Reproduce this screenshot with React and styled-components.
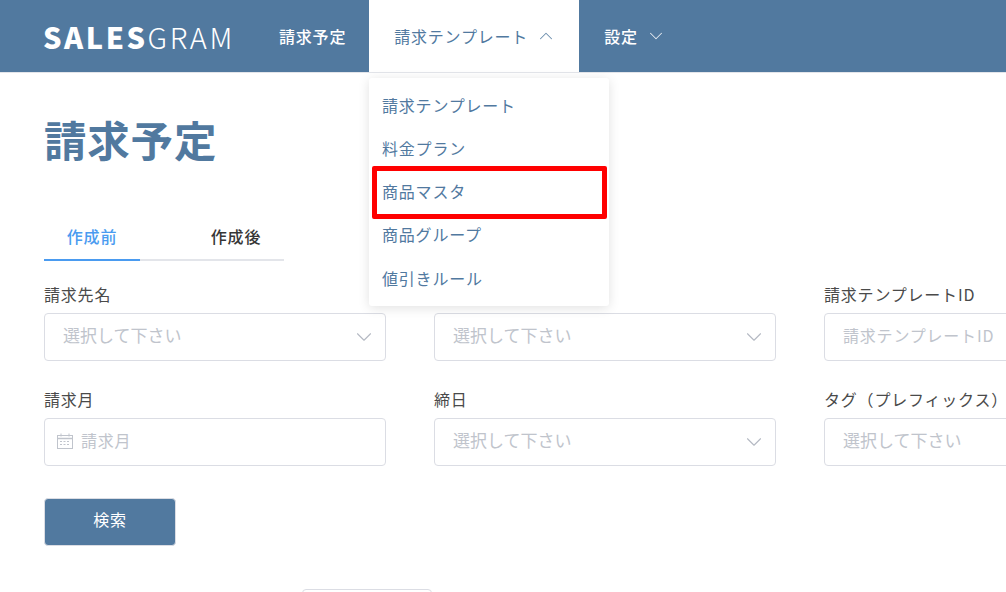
import { useState } from 'react';
import styled, { createGlobalStyle } from 'styled-components';
import { FiChevronDown, FiChevronUp } from 'react-icons/fi';

const GlobalStyle = createGlobalStyle`
  html, body {
    margin: 0;
    height: 100%;
    overflow: hidden;
    background: #fff;
  }
  body {
    font-family: 'Noto Sans CJK JP', 'Noto Sans', sans-serif;
    font-size: 16px;
    letter-spacing: 0.8px;
    color: #363636;
  }
  * {
    box-sizing: border-box;
  }
`;

const Header = styled.header`
  display: flex;
  align-items: stretch;
  height: 73px;
  padding-left: 43px;
  background: #51799f;
  border-bottom: 1px solid #e3e5ea;
`;
const Logo = styled.div`
  display: flex;
  align-items: center;
  width: 211px;
  font-size: 29px;
  letter-spacing: 2.55px;
  color: #fff;
  b {
    font-weight: 900;
  }
  span {
    font-weight: 300;
  }
`;
const Nav = styled.nav`
  display: flex;
  position: relative;
`;
const NavItem = styled.div`
  display: flex;
  align-items: center;
  gap: 7px;
  padding: 0 23px 1px 25px;
  font-weight: ${({ active }) => (active ? 400 : 500)};
  color: ${({ active }) => (active ? '#51799f' : '#fff')};
  background: ${({ active }) => (active ? '#fff' : 'transparent')};
  svg {
    font-size: 22px;
    margin-right: -1px;
    stroke-width: 1.1;
    opacity: 0.85;
  }
`;
const Menu = styled.ul`
  position: absolute;
  top: 78px;
  left: 115px;
  width: 240px;
  margin: 0;
  padding: 5px 0 7px;
  list-style: none;
  background: #fff;
  border-radius: 3px;
  box-shadow: 0 2px 12px rgba(0, 0, 0, 0.12);
  z-index: 10;
`;
const MenuItem = styled.li`
  position: relative;
  display: flex;
  align-items: center;
  height: 43.25px;
  padding: 0 13px;
  color: #51799f;
`;
const Highlight = styled.span`
  position: absolute;
  top: -4px;
  left: 3px;
  right: 2px;
  bottom: -6px;
  border: 5px solid #ff0000;
  border-radius: 2px;
`;
const Main = styled.main`
  padding-left: 44px;
  overflow: hidden;
`;
const Title = styled.h1`
  margin: 0;
  padding-top: 36px;
  font-size: 42.5px;
  line-height: 60px;
  font-weight: 700;
  letter-spacing: 0.8px;
  color: #51799f;
`;
const Tabs = styled.div`
  display: flex;
  gap: 48px;
  width: 240px;
  margin-top: 47px;
  border-bottom: 2px solid #e3e5ea;
`;
const Tab = styled.div`
  width: 96px;
  height: 45px;
  margin-bottom: -2px;
  text-align: center;
  line-height: 40px;
  font-weight: 500;
  color: ${({ active }) => (active ? '#4a9bf0' : '#363636')};
  border-bottom: 2px solid ${({ active }) => (active ? '#4a9bf0' : 'transparent')};
`;
const Form = styled.form`
  display: grid;
  grid-template-columns: repeat(3, 342px);
  column-gap: 48px;
  row-gap: 26px;
  margin-top: 21px;
`;
const Field = styled.div`
  display: flex;
  flex-direction: column;
`;
const Label = styled.label`
  height: 31px;
  line-height: 24px;
  white-space: nowrap;
  color: #4a4a4a;
`;
const Control = styled.div`
  display: flex;
  align-items: center;
  justify-content: space-between;
  height: 48px;
  padding: 0 18px 5px;
  border: 1px solid #dbdde4;
  border-radius: 4px;
  color: #c0c4cc;
`;
const Placeholder = styled.span`
  font-size: ${({ wide }) => (wide ? '17px' : '16px')};
  letter-spacing: ${({ wide }) => (wide ? '0' : '0.8px')};
`;
const Chevron = styled(FiChevronDown)`
  flex: none;
  font-size: 26px;
  margin: 5px -10px 0 0;
  stroke-width: 1;
  color: #b4b9c3;
`;
const DateValue = styled.div`
  display: flex;
  align-items: center;
  gap: 8px;
  margin-left: -6px;
  svg {
    margin-top: 3px;
  }
`;
const SearchButton = styled.button`
  display: block;
  width: 132px;
  height: 48px;
  margin-top: 32px;
  padding-bottom: 7px;
  border: 1px solid #dbdde4;
  border-radius: 4px;
  background: #51799f;
  color: #fff;
  font: inherit;
  letter-spacing: inherit;
`;
const Pager = styled.div`
  width: 130px;
  height: 30px;
  margin: 43px 0 0 258px;
  border: 1px solid #dbdde4;
  border-radius: 4px;
  background: #fff;
`;

function CalendarIcon() {
  return (
    <svg width="16" height="16" viewBox="0 0 16 16" fill="none" stroke="#c0c4cc">
      <rect x="0.5" y="2.5" width="15" height="13" />
      <path d="M0.5 5.5h15" strokeWidth="1.5" />
      <path d="M4 0.5v3M12 0.5v3" />
      <path d="M3 8.5h10M3 11.5h10" strokeDasharray="2 1.5" />
    </svg>
  );
}

const menuItems = ['請求テンプレート', '料金プラン', '商品マスタ', '商品グループ', '値引きルール'];

const fields = [
  { label: '請求先名', placeholder: '選択して下さい', select: true, wide: true },
  { label: '', placeholder: '選択して下さい', select: true, wide: true },
  { label: '請求テンプレートID', placeholder: '請求テンプレートID' },
  { label: '請求月', placeholder: '請求月', date: true },
  { label: '締日', placeholder: '選択して下さい', select: true, wide: true },
  { label: 'タグ（プレフィックス）', placeholder: '選択して下さい', wide: true },
];

export default function App() {
  const [tab] = useState(0);

  return (
    <>
      <GlobalStyle />
      <Header>
        <Logo>
          <b>SALES</b>
          <span>GRAM</span>
        </Logo>
        <Nav>
          <NavItem>請求予定</NavItem>
          <NavItem active>
            請求テンプレート
            <FiChevronUp />
          </NavItem>
          <NavItem>
            設定
            <FiChevronDown />
          </NavItem>
          <Menu>
            {menuItems.map((item) => (
              <MenuItem key={item}>
                {item}
                {item === '商品マスタ' && <Highlight />}
              </MenuItem>
            ))}
          </Menu>
        </Nav>
      </Header>
      <Main>
        <Title>請求予定</Title>
        <Tabs>
          <Tab active={tab === 0}>作成前</Tab>
          <Tab active={tab === 1}>作成後</Tab>
        </Tabs>
        <Form>
          {fields.map((field, i) => (
            <Field key={i}>
              <Label>{field.label}</Label>
              <Control>
                {field.date ? (
                  <DateValue>
                    <CalendarIcon />
                    {field.placeholder}
                  </DateValue>
                ) : (
                  <Placeholder wide={field.wide}>{field.placeholder}</Placeholder>
                )}
                {field.select && <Chevron />}
              </Control>
            </Field>
          ))}
        </Form>
        <SearchButton type="button">検索</SearchButton>
        <Pager />
      </Main>
    </>
  );
}
